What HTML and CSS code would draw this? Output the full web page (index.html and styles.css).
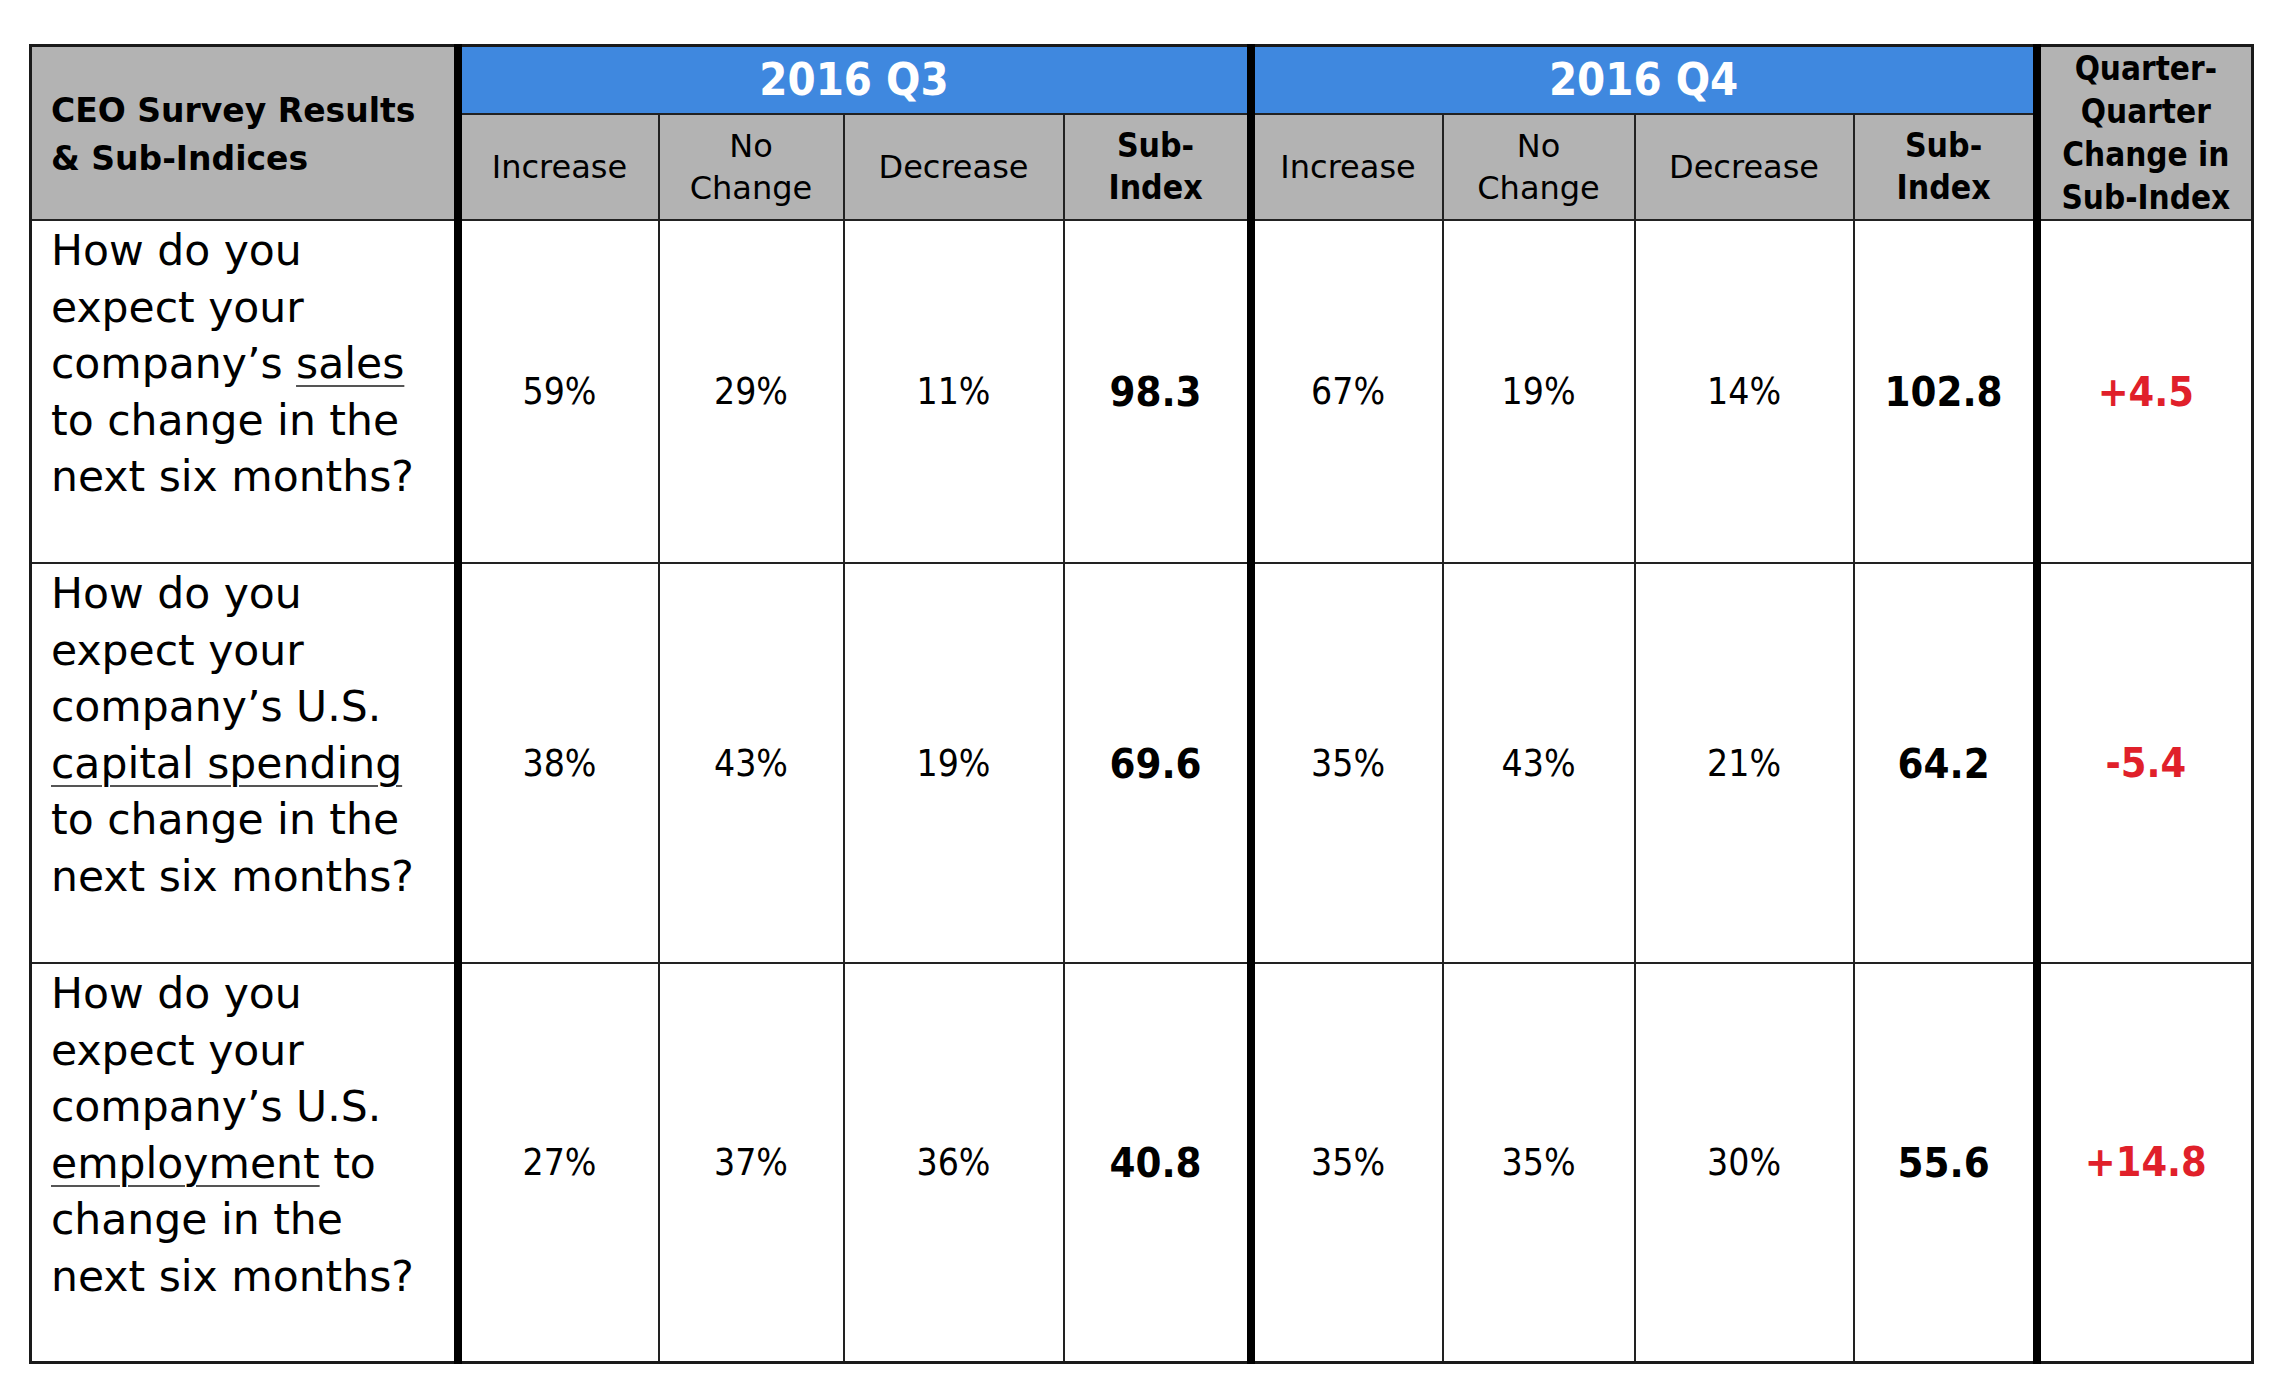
FILE: index.html
```html
<!DOCTYPE html>
<html lang="en">
<head>
<meta charset="utf-8">
<title>CEO Survey Results</title>
<link rel="stylesheet" href="styles.css">
</head>
<body>
<div class="page">
<table class="survey">
  <colgroup>
    <col class="c-q">
    <col class="c-a"><col class="c-b"><col class="c-c"><col class="c-d">
    <col class="c-e"><col class="c-f"><col class="c-g"><col class="c-h">
    <col class="c-i">
  </colgroup>
  <thead>
    <tr class="hr-top">
      <th rowspan="2" class="title thick-r">CEO Survey Results<br>&amp; Sub-Indices</th>
      <th colspan="4" class="quarter thick-r">2016 Q3</th>
      <th colspan="4" class="quarter thick-r">2016 Q4</th>
      <th rowspan="2" class="qq">Quarter-<br>Quarter<br>Change in<br>Sub-Index</th>
    </tr>
    <tr class="hr-sub">
      <th class="sub">Increase</th>
      <th class="sub">No<br>Change</th>
      <th class="sub">Decrease</th>
      <th class="sub bold thick-r">Sub-<br>Index</th>
      <th class="sub">Increase</th>
      <th class="sub">No<br>Change</th>
      <th class="sub">Decrease</th>
      <th class="sub bold thick-r">Sub-<br>Index</th>
    </tr>
  </thead>
  <tbody>
    <tr class="r1">
      <td class="question thick-r">How do you<br>expect your<br>company’s <u>sales</u><br>to change in the<br>next six months?</td>
      <td class="num">59%</td><td class="num">29%</td><td class="num">11%</td><td class="num idx thick-r">98.3</td>
      <td class="num">67%</td><td class="num">19%</td><td class="num">14%</td><td class="num idx thick-r">102.8</td>
      <td class="num chg">+4.5</td>
    </tr>
    <tr class="r2">
      <td class="question thick-r">How do you<br>expect your<br>company’s U.S.<br><u>capital spending</u><br>to change in the<br>next six months?</td>
      <td class="num">38%</td><td class="num">43%</td><td class="num">19%</td><td class="num idx thick-r">69.6</td>
      <td class="num">35%</td><td class="num">43%</td><td class="num">21%</td><td class="num idx thick-r">64.2</td>
      <td class="num chg">-5.4</td>
    </tr>
    <tr class="r3">
      <td class="question thick-r">How do you<br>expect your<br>company’s U.S.<br><u>employment</u> to<br>change in the<br>next six months?</td>
      <td class="num">27%</td><td class="num">37%</td><td class="num">36%</td><td class="num idx thick-r">40.8</td>
      <td class="num">35%</td><td class="num">35%</td><td class="num">30%</td><td class="num idx thick-r">55.6</td>
      <td class="num chg">+14.8</td>
    </tr>
  </tbody>
</table>
</div>
</body>
</html>
```

FILE: styles.css
```css
html, body {
  margin: 0;
  padding: 0;
  background: #ffffff;
}

.page {
  padding: 44px 0 0 29px;
  font-family: "DejaVu Sans Condensed", "DejaVu Sans", sans-serif;
  color: #000;
}

.survey {
  border-collapse: collapse;
  table-layout: fixed;
  width: 2222px;
  border: 3px solid #1a1a1a;
}

.c-q { width: 427px; }
.c-a { width: 201px; }
.c-b { width: 185px; }
.c-c { width: 220px; }
.c-d { width: 187px; }
.c-e { width: 192px; }
.c-f { width: 192px; }
.c-g { width: 219px; }
.c-h { width: 183px; }
.c-i { width: 216px; }

.survey th,
.survey td {
  border: 2px solid #222;
  padding: 0;
}

.survey .thick-r {
  border-right: 8px solid #000;
}

.hr-top { height: 67px; }
.hr-sub { height: 104px; }
.r1 { height: 343px; }
.r2 { height: 400px; }
.r3 { height: 399px; }

.survey .title {
  background: #b3b3b3;
  text-align: left;
  font-family: "DejaVu Sans", sans-serif;
  font-weight: bold;
  font-size: 33px;
  line-height: 48px;
  padding: 4px 0 0 19px;
}

.survey .quarter {
  background: #3f88df;
  color: #fff;
  font-weight: bold;
  font-size: 45px;
  line-height: 60px;
  text-align: center;
}

.survey .qq {
  background: #b3b3b3;
  font-weight: bold;
  font-size: 33px;
  line-height: 43px;
  text-align: center;
}

.survey .sub {
  background: #b3b3b3;
  font-family: "DejaVu Sans", sans-serif;
  font-weight: normal;
  font-size: 32px;
  line-height: 42px;
  text-align: center;
}

.survey .sub.bold {
  font-family: "DejaVu Sans Condensed", "DejaVu Sans", sans-serif;
  font-weight: bold;
  font-size: 33.5px;
}

.survey .question {
  vertical-align: top;
  text-align: left;
  font-family: "DejaVu Sans", sans-serif;
  font-size: 42.5px;
  line-height: 56.6px;
  padding: 2px 0 0 19px;
}

.question u {
  text-decoration-thickness: 2px;
  text-underline-offset: 7px;
  text-decoration-color: #555;
}

.survey .num {
  text-align: center;
  vertical-align: middle;
  font-size: 37px;
}

.survey .idx {
  font-weight: bold;
  font-size: 41.5px;
}

.survey .chg {
  color: #e0202a;
  font-weight: bold;
  font-size: 41px;
}
```
